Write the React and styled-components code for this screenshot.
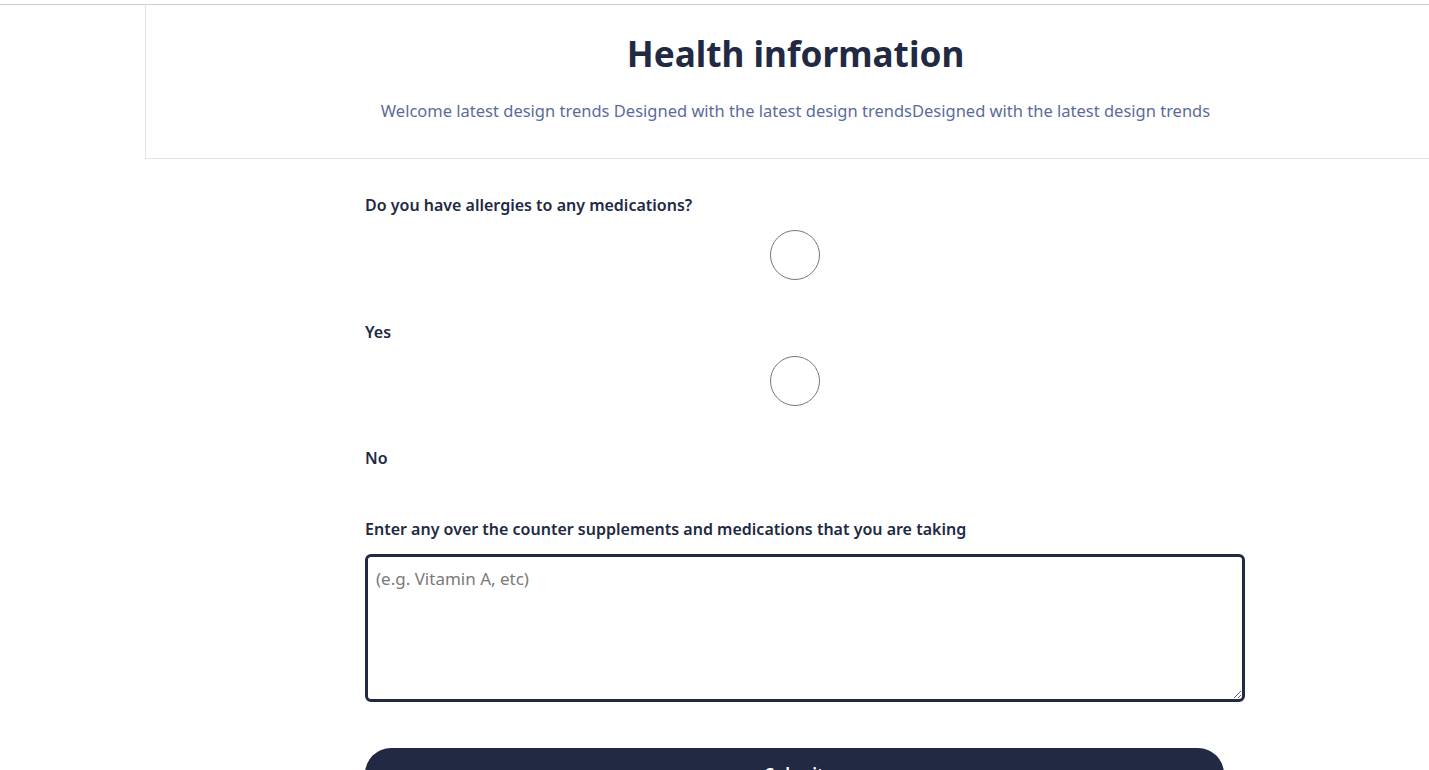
import React from "react"
import styled, { createGlobalStyle } from "styled-components"

const GlobalStyle = createGlobalStyle`
  body {
    margin: 0;
    padding-top: 4px;
    background: #fff;
    font-family: "Noto Sans", "Open Sans", sans-serif;
    overflow: hidden;
  }
`

const Page = styled.div`
  border-top: 1px solid #cfcfcf;
  width: 1429px;
`

const Header = styled.header`
  margin-left: 145px;
  width: 1300px;
  height: 154px;
  border-left: 1px solid #e3e3e3;
  border-bottom: 1px solid #e3e3e3;
  display: flex;
  flex-direction: column;
  align-items: center;
  box-sizing: border-box;
  padding-top: 25px;
`

const Title = styled.h1`
  margin: 0;
  font-size: 35.2px;
  line-height: 46px;
  font-weight: 700;
  color: #222a43;
`

const Subtitle = styled.p`
  margin: 24px 0 0;
  font-size: 16.5px;
  line-height: 22px;
  color: #5b6c9b;
`

const Main = styled.main`
  margin-left: 145px;
  width: 1300px;
  display: flex;
  justify-content: center;
`

const Form = styled.form`
  width: 860px;
  padding-top: 34px;
`

const Label = styled.label`
  display: block;
  font-size: 16px;
  line-height: 24px;
  font-weight: 600;
  color: #222a43;
  margin-top: ${(p) => p.$top || 0}px;
`

const Radio = styled.input.attrs({ type: "radio" })`
  appearance: none;
  display: block;
  width: 50px;
  height: 50px;
  margin: ${(p) => p.$top || 0}px auto 0;
  border: 1px solid #777;
  border-radius: 50%;
  background: #fff;
  box-sizing: border-box;
`

const TextArea = styled.textarea`
  display: block;
  width: 880px;
  height: 148px;
  margin-top: 13px;
  box-sizing: border-box;
  border: 3px solid #222a43;
  border-radius: 6px;
  padding: 10px 8px;
  font-family: "Noto Sans", "Open Sans", sans-serif;
  font-size: 17px;
  color: #222a43;
  outline: none;
  &::placeholder {
    color: #7a7a7a;
  }
`

const Button = styled.button`
  display: flex;
  justify-content: center;
  align-items: flex-start;
  width: 859px;
  height: 52px;
  margin-top: 46px;
  padding-top: 15px;
  box-sizing: border-box;
  border: 0;
  border-radius: 26px;
  background: #222a43;
  color: #fff;
  font-family: "Noto Sans", "Open Sans", sans-serif;
  font-size: 17px;
  font-weight: 600;
`

export default function App() {
  return (
    <>
      <GlobalStyle />
      <Page>
        <Header>
          <Title>Health information</Title>
          <Subtitle>
            Welcome latest design trends Designed with the latest design trendsDesigned with the latest design trends
          </Subtitle>
        </Header>
        <Main>
          <Form>
            <Label>Do you have allergies to any medications?</Label>
            <Radio name="allergies" $top={13} />
            <Label $top={40}>Yes</Label>
            <Radio name="allergies" $top={12} />
            <Label $top={40}>No</Label>
            <Label $top={47}>Enter any over the counter supplements and medications that you are taking</Label>
            <TextArea placeholder="(e.g. Vitamin A, etc)" />
            <Button type="button">Submit</Button>
          </Form>
        </Main>
      </Page>
    </>
  )
}
